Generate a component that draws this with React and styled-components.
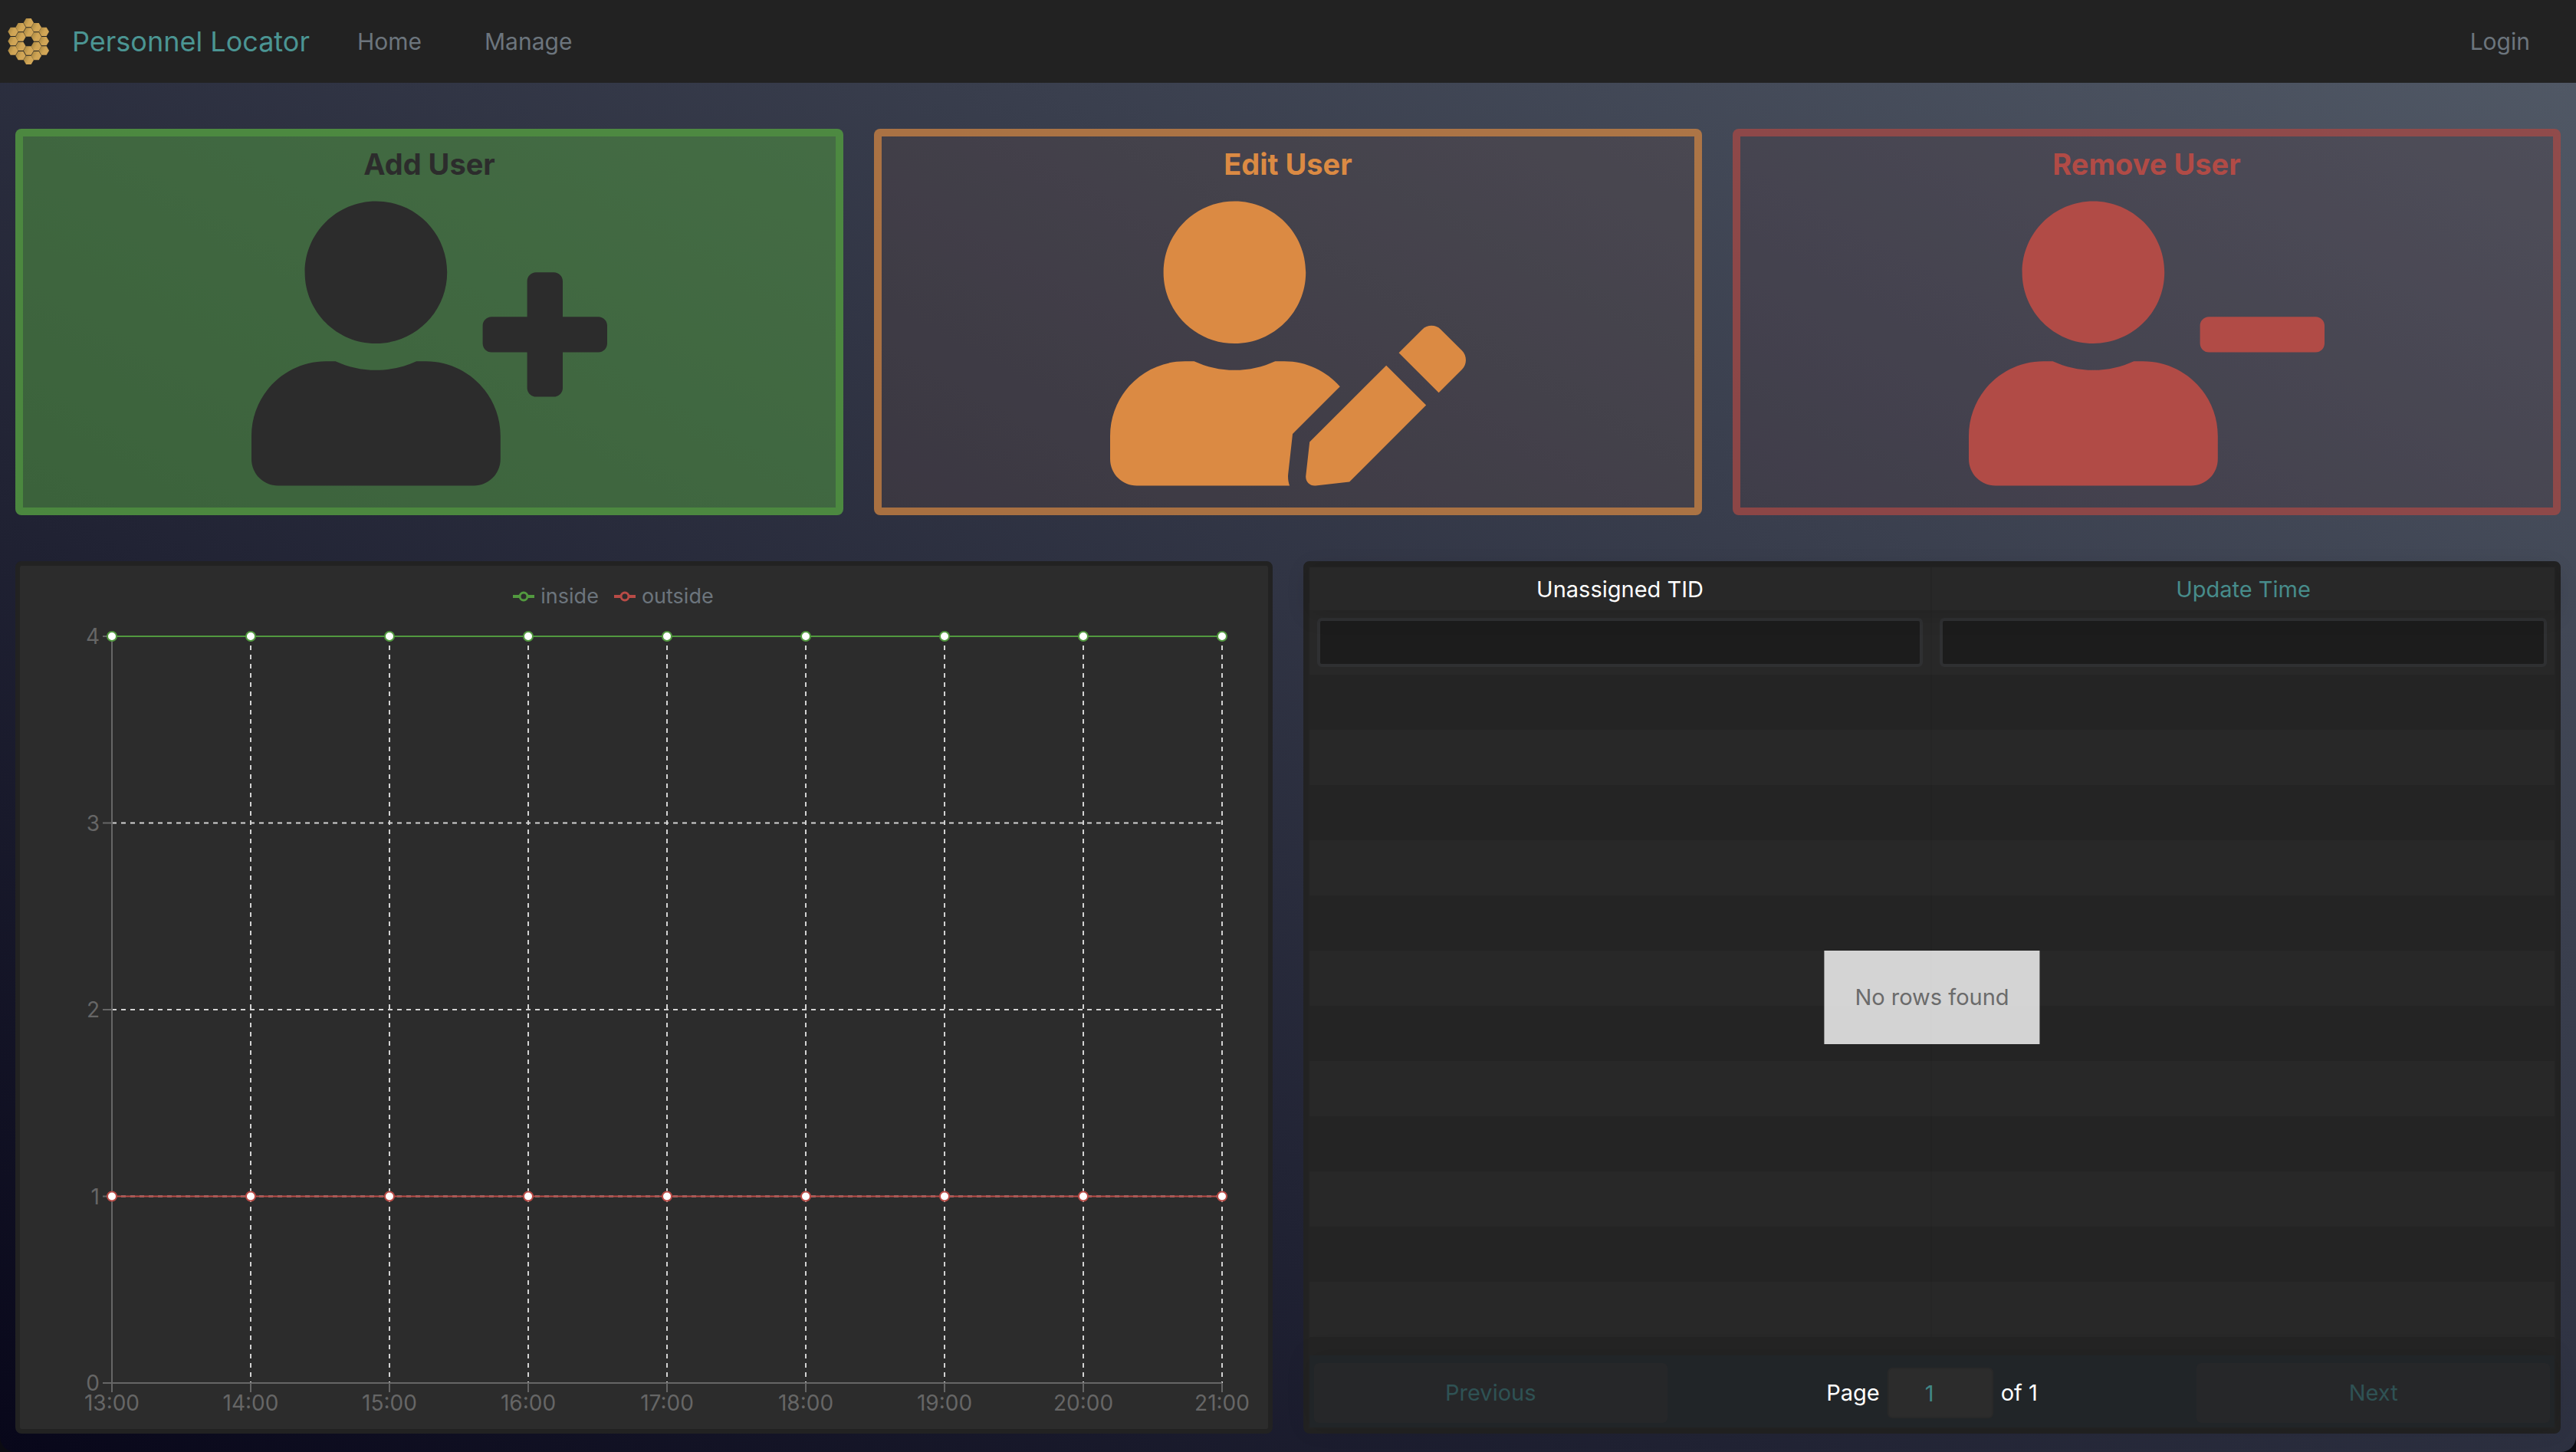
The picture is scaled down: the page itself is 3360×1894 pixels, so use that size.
import React, { useState } from "react";
import styled, { createGlobalStyle } from "styled-components";
import { FaUserPlus, FaUserEdit, FaUserMinus } from "react-icons/fa";

const GlobalStyle = createGlobalStyle`
  *, *::before, *::after { box-sizing: border-box; }
  body {
    margin: 0;
    background: #0b0b12;
    font-family: Inter, "Liberation Sans", sans-serif;
    font-size: 29px;
    line-height: 42px;
  }
  button, input { font: inherit; }
`;

const Page = styled.div`
  min-height: 100vh;
  display: flex;
  flex-direction: column;
  background: linear-gradient(to top right, #08071a, #525a67);
  border-radius: 0 0 20px 20px;
  overflow: hidden;
`;

const Navbar = styled.nav`
  display: flex;
  align-items: center;
  height: 108px;
  padding: 0 32px 0 10px;
  background: #222;
`;

const Brand = styled.a`
  display: flex;
  align-items: center;
  gap: 30px;
  margin-right: 34px;
  color: #4b9593;
  font-size: 36px;
  line-height: 60px;
  text-decoration: none;
`;

const NavList = styled.ul`
  flex: 1;
  display: flex;
  margin: 0;
  padding: 0;
  list-style: none;
`;

const NavItem = styled.li`
  margin-left: ${(p) => (p.$end ? "auto" : "0")};
`;

const NavLink = styled.a`
  display: block;
  padding: 0 28px;
  margin-right: ${(p) => (p.$end ? "0" : "26px")};
  color: #6c757d;
  font-size: 30px;
  text-decoration: none;
`;

const Main = styled.main`
  flex: 1;
  display: flex;
  flex-direction: column;
  gap: 60px;
  padding: 60px 20px 24px;
`;

const ActionRow = styled.section`
  display: grid;
  grid-template-columns: repeat(3, 1fr);
  gap: 40px;
`;

const ActionCard = styled.button`
  display: flex;
  flex-direction: column;
  align-items: center;
  gap: 24px;
  padding: 12px 0 28px;
  border: 10px solid ${(p) => p.$edge};
  border-radius: 8px;
  background: ${(p) => p.$fill};
  color: ${(p) => p.$ink};
  cursor: pointer;

  svg {
    width: 464px;
    height: 372px;
  }
`;

const ActionTitle = styled.span`
  font-size: 38px;
  font-weight: 700;
  line-height: 48px;
`;

const PanelRow = styled.section`
  flex: 1;
  display: grid;
  grid-template-columns: repeat(2, minmax(0, 1fr));
  gap: 40px;
`;

const Panel = styled.div`
  display: flex;
  flex-direction: column;
  border: 6px solid #222;
  border-radius: 8px;
  background: #2c2c2c;
`;

const Legend = styled.ul`
  display: flex;
  justify-content: center;
  gap: 20px;
  margin: 0;
  padding: 18px 80px 2px 0;
  list-style: none;
  color: #6c757d;
  font-size: 27px;
  line-height: 44px;
`;

const LegendItem = styled.li`
  display: flex;
  align-items: center;
  gap: 8px;
`;

const Plot = styled.svg`
  display: block;
  width: 100%;
  height: auto;
  font-size: 28px;
`;

const TableFrame = styled.div`
  position: relative;
  flex: 1;
  display: flex;
  flex-direction: column;
  border: 2px solid #232323;
`;

const TableArea = styled.div`
  flex: 1;
  background: #242424;
`;

const Table = styled.table`
  width: 100%;
  table-layout: fixed;
  border-collapse: separate;
  border-spacing: 0;
`;

const HeadRow = styled.tr`
  position: relative;
  box-shadow: 0 4px 30px rgba(0, 0, 0, 0.15);
`;

const HeadCell = styled.th`
  height: 56px;
  padding: 2px 0 0;
  border-right: 2px solid #252525;
  background: #282828;
  color: ${(p) => (p.$accent ? "#478c8b" : "#fff")};
  font-weight: 400;

  &:last-child { border-right: 0; }
`;

const FilterCell = styled.td`
  height: 84px;
  padding: 10px;
  border-right: 2px solid #262626;
  background: #282828;

  &:last-child { border-right: 0; }
`;

const FilterInput = styled.input`
  display: block;
  width: 100%;
  height: 64px;
  padding: 0 14px;
  border: 4px solid #2f3032;
  border-radius: 6px;
  outline: none;
  background: #1c1c1c;
  color: #4b9593;
`;

const BodyCell = styled.td`
  height: 72px;
  padding: 0;
  border-right: 2px solid rgba(0, 0, 0, 0.04);
  background: ${(p) => (p.$even ? "#282828" : "#242424")};

  &:last-child { border-right: 0; }
`;

const NoData = styled.div`
  position: absolute;
  top: 50%;
  left: 50%;
  padding: 40px;
  transform: translate(-50%, -50%);
  background: rgba(255, 255, 255, 0.8);
  color: #6b6b6b;
  line-height: 42px;
  white-space: nowrap;
`;

const Pagination = styled.div`
  display: flex;
  align-items: center;
  padding: 10px 6px 6px;
  background: #212528;
  box-shadow: 0 0 30px rgba(0, 0, 0, 0.1);
`;

const PageButton = styled.button`
  flex: 1;
  height: 78px;
  padding: 0;
  border: 0;
  border-radius: 6px;
  background: #262729;
  color: #4b9593;

  &:disabled { color: #2f5254; }
`;

const PageInfo = styled.div`
  flex: 1.5;
  display: flex;
  align-items: center;
  justify-content: center;
  gap: 10px;
  color: #fff;
`;

const PageInput = styled.input`
  width: 138px;
  height: 66px;
  padding: 0 28px 0 0;
  border: 2px solid #292929;
  border-radius: 6px;
  outline: none;
  background: #2c2c2c;
  color: #418786;
  text-align: center;
`;

const GREEN = "#52993f";
const RED = "#b84b46";

const MIRROR_COLUMNS = [
  { x: 51, ys: [91, 128, 165] },
  { x: 81, ys: [74, 111, 148, 185] },
  { x: 112, ys: [56, 93, 165, 202] },
  { x: 142, ys: [74, 111, 148, 185] },
  { x: 172, ys: [91, 128, 165] },
];

function Logo() {
  return (
    <svg width="54" height="62" viewBox="30 36 162 186" aria-hidden="true">
      <defs>
        <linearGradient id="gold" x1="0" y1="0.2" x2="1" y2="0.6">
          <stop offset="0" stopColor="#a5843f" />
          <stop offset="0.55" stopColor="#d0a555" />
          <stop offset="1" stopColor="#d3a758" />
        </linearGradient>
      </defs>
      {MIRROR_COLUMNS.map(({ x, ys }) =>
        ys.map((y) => (
          <polygon
            key={`${x}-${y}`}
            fill="url(#gold)"
            points={`${x - 20},${y} ${x - 10},${y - 17} ${x + 10},${y - 17} ${x + 20},${y} ${x + 10},${y + 17} ${x - 10},${y + 17}`}
          />
        ))
      )}
    </svg>
  );
}

function LegendMark({ color }) {
  return (
    <svg width="28" height="28" viewBox="0 0 28 28" fill="none" stroke={color} strokeWidth="4" aria-hidden="true">
      <path d="M0 14h9M19 14h9" />
      <circle cx="14" cy="14" r="5" strokeWidth="3" />
    </svg>
  );
}

const HOURS = ["13:00", "14:00", "15:00", "16:00", "17:00", "18:00", "19:00", "20:00", "21:00"];
const SERIES = [
  { name: "inside", color: GREEN, values: HOURS.map(() => 4) },
  { name: "outside", color: RED, values: HOURS.map(() => 1) },
];
const LEFT = 120;
const RIGHT = 1568;
const TOP = 28;
const BOTTOM = 1002;
const MAX = 4;
const xAt = (i) => LEFT + (i * (RIGHT - LEFT)) / (HOURS.length - 1);
const yAt = (v) => BOTTOM - (v * (BOTTOM - TOP)) / MAX;

function OccupancyChart() {
  return (
    <Panel>
      <Legend>
        {SERIES.map((s) => (
          <LegendItem key={s.name}>
            <LegendMark color={s.color} />
            {s.name}
          </LegendItem>
        ))}
      </Legend>
      <Plot viewBox="0 0 1628 1062" role="img" aria-label="People inside and outside by hour">
        <g stroke="#d2d2d2" strokeWidth="2" strokeDasharray="6 6">
          {[1, 2, 3].map((v) => (
            <line key={v} x1={LEFT} x2={RIGHT} y1={yAt(v)} y2={yAt(v)} />
          ))}
          {HOURS.map((h, i) => i > 0 && <line key={h} x1={xAt(i)} x2={xAt(i)} y1={TOP} y2={BOTTOM} />)}
        </g>
        <g stroke="#666" strokeWidth="2">
          <line x1={LEFT} x2={LEFT} y1={TOP} y2={BOTTOM} />
          <line x1={LEFT} x2={RIGHT} y1={BOTTOM} y2={BOTTOM} />
          {HOURS.map((h, i) => (
            <line key={h} x1={xAt(i)} x2={xAt(i)} y1={BOTTOM} y2={BOTTOM + 12} />
          ))}
          {[0, 1, 2, 3, 4].map((v) => (
            <line key={v} x1={LEFT - 12} x2={LEFT} y1={yAt(v)} y2={yAt(v)} />
          ))}
        </g>
        <g fill="#666">
          {HOURS.map((h, i) => (
            <text key={h} x={xAt(i)} y={BOTTOM + 36} textAnchor="middle">{h}</text>
          ))}
          {[0, 1, 2, 3, 4].map((v) => (
            <text key={v} x={LEFT - 16} y={yAt(v) + 10} textAnchor="end">{v}</text>
          ))}
        </g>
        {SERIES.map((s) => (
          <g key={s.name} stroke={s.color} strokeWidth="2">
            <polyline fill="none" points={s.values.map((v, i) => `${xAt(i)},${yAt(v)}`).join(" ")} />
            {s.values.map((v, i) => (
              <circle key={HOURS[i]} cx={xAt(i)} cy={yAt(v)} r="6" fill="#fff" />
            ))}
          </g>
        ))}
      </Plot>
    </Panel>
  );
}

const COLUMNS = ["Unassigned TID", "Update Time"];
const EMPTY_ROWS = Array.from({ length: 12 }, (_, i) => i);

function TagTable() {
  const [page, setPage] = useState("1");
  return (
    <Panel>
      <TableFrame>
        <TableArea>
          <Table>
            <thead>
              <HeadRow>
                {COLUMNS.map((c, i) => (
                  <HeadCell key={c} scope="col" $accent={i === 1}>{c}</HeadCell>
                ))}
              </HeadRow>
              <tr>
                {COLUMNS.map((c) => (
                  <FilterCell key={c}>
                    <FilterInput type="text" aria-label={`Filter ${c}`} />
                  </FilterCell>
                ))}
              </tr>
            </thead>
            <tbody>
              {EMPTY_ROWS.map((r) => (
                <tr key={r}>
                  {COLUMNS.map((c) => (
                    <BodyCell key={c} $even={r % 2 === 1} />
                  ))}
                </tr>
              ))}
            </tbody>
          </Table>
        </TableArea>
        <Pagination>
          <PageButton type="button" disabled>Previous</PageButton>
          <PageInfo>
            <label htmlFor="page">Page</label>
            <PageInput id="page" type="text" inputMode="numeric" value={page} onChange={(e) => setPage(e.target.value)} />
            <span>of 1</span>
          </PageInfo>
          <PageButton type="button" disabled>Next</PageButton>
        </Pagination>
        <NoData>No rows found</NoData>
      </TableFrame>
    </Panel>
  );
}

export default function App() {
  return (
    <>
      <GlobalStyle />
      <Page>
        <Navbar>
          <Brand href="#">
            <Logo />
            Personnel Locator
          </Brand>
          <NavList>
            <NavItem><NavLink href="#home">Home</NavLink></NavItem>
            <NavItem><NavLink href="#manage">Manage</NavLink></NavItem>
            <NavItem $end><NavLink $end href="#login">Login</NavLink></NavItem>
          </NavList>
        </Navbar>
        <Main>
          <ActionRow>
            <ActionCard type="button" $edge="rgba(80, 145, 65, 0.8)" $fill="rgba(80, 145, 65, 0.58)" $ink="#2c2c2c">
              <ActionTitle>Add User</ActionTitle>
              <FaUserPlus />
            </ActionCard>
            <ActionCard type="button" $edge="rgba(219, 138, 67, 0.68)" $fill="rgba(93, 72, 71, 0.3)" $ink="#db8a43">
              <ActionTitle>Edit User</ActionTitle>
              <FaUserEdit />
            </ActionCard>
            <ActionCard type="button" $edge="rgba(177, 75, 70, 0.68)" $fill="rgba(81, 59, 66, 0.3)" $ink="#b14b46">
              <ActionTitle>Remove User</ActionTitle>
              <FaUserMinus />
            </ActionCard>
          </ActionRow>
          <PanelRow>
            <OccupancyChart />
            <TagTable />
          </PanelRow>
        </Main>
      </Page>
    </>
  );
}
